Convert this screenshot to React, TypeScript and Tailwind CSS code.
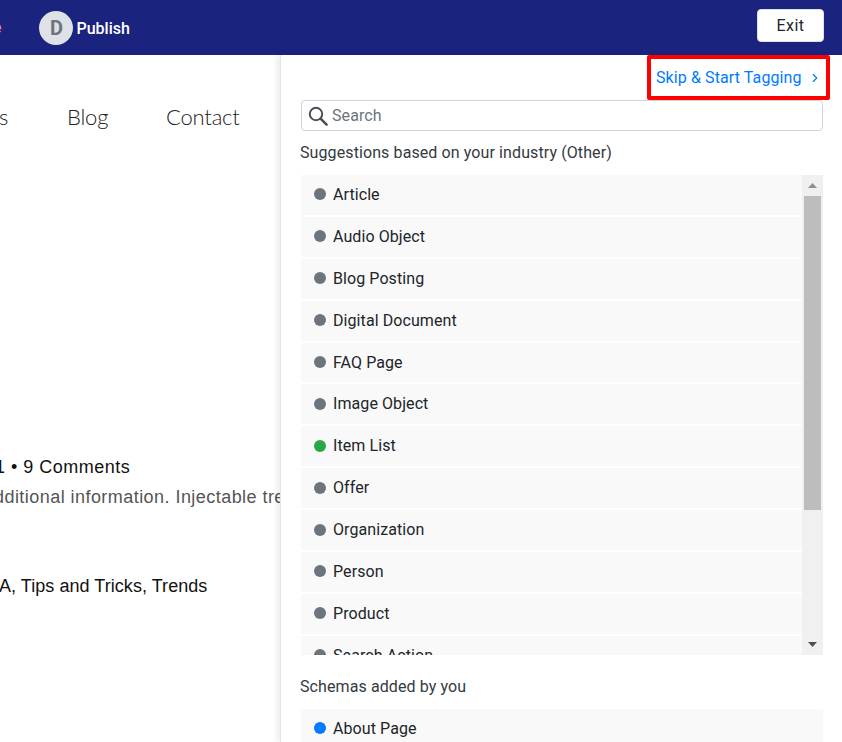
import React from 'react';
import { ChevronRight } from 'lucide-react';

const suggestions = [
    { name: 'Article', color: 'bg-[#6c757d]' },
    { name: 'Audio Object', color: 'bg-[#6c757d]' },
    { name: 'Blog Posting', color: 'bg-[#6c757d]' },
    { name: 'Digital Document', color: 'bg-[#6c757d]' },
    { name: 'FAQ Page', color: 'bg-[#6c757d]' },
    { name: 'Image Object', color: 'bg-[#6c757d]' },
    { name: 'Item List', color: 'bg-[#28a745]' },
    { name: 'Offer', color: 'bg-[#6c757d]' },
    { name: 'Organization', color: 'bg-[#6c757d]' },
    { name: 'Person', color: 'bg-[#6c757d]' },
    { name: 'Product', color: 'bg-[#6c757d]' },
    { name: 'Search Action', color: 'bg-[#6c757d]' },
];

const SchemaRow: React.FC<{ name: string; color: string }> = ({ name, color }) => (
    <div className="flex h-[39.9px] shrink-0 items-center bg-[#f9f9f9] pl-[13px] text-[16px] tracking-[0.08px] text-[#212529]">
        <span className={`mb-[1px] h-3 w-3 rounded-full ${color}`} />
        <span className="ml-[7px]">{name}</span>
    </div>
);

const SearchIcon = () => (
    <svg width="22" height="22" viewBox="0 0 22 22" fill="none" stroke="#495057" strokeWidth="2" strokeLinecap="round">
        <circle cx="9" cy="9" r="6.2" />
        <path d="m13.6 13.6 6 6" strokeWidth="2.6" />
    </svg>
);

const App: React.FC = () => {
    return (
        <div className="flex h-[742px] w-[842px] flex-col overflow-hidden bg-white font-['Roboto',sans-serif]">
            <header className="flex h-[55px] shrink-0 items-center bg-[#1a237e] pr-[18px]">
                <span className="-ml-[7px] mt-[1px] text-[16px] text-[#ff8a65]">e</span>
                <span className="ml-[38px] mt-[1px] flex h-[34px] w-[34px] items-center justify-center rounded-full bg-[#dee2e6] text-[20px] font-bold text-[#6c757d]">D</span>
                <span className="ml-[3px] mt-[2px] text-[16px] font-medium text-white">Publish</span>
                <button className="mb-[4px] ml-auto h-[33px] w-[67px] rounded border border-[#dee2e6] bg-white text-[16px] tracking-[0.5px] text-[#212529]">Exit</button>
            </header>

            <div className="flex min-h-0 flex-1">
                <main className="w-[280px] shrink-0 overflow-hidden whitespace-nowrap font-['Liberation_Sans',sans-serif] text-[18px] text-[#111]">
                    <nav className="mt-[47px] flex font-['Lato',sans-serif] text-[22px] font-light leading-[30px] tracking-[-0.2px] text-[#222]">
                        <span className="-ml-[1px] w-[68px]">s</span>
                        <span className="w-[99px]">Blog</span>
                        <span>Contact</span>
                    </nav>
                    <p className="mt-[323px] -ml-[5px] leading-[24px] tracking-[0.5px]">1 • 9 Comments</p>
                    <p className="mt-[6px] -ml-[6px] leading-[24px] tracking-[0.45px] text-[#555]">dditional information. Injectable trends</p>
                    <p className="mt-[65px] -ml-[1px] leading-[24px] tracking-[0.05px]">A, Tips and Tricks, Trends</p>
                </main>

                <aside className="flex min-w-0 flex-1 flex-col border-l border-[#e4e4e4] pl-[20px] pr-[19px] shadow-[-3px_0_6px_rgba(0,0,0,0.08)]">
                    <div className="flex shrink-0 justify-end">
                        <a className="-mr-[7px] flex h-[45px] w-[183px] items-center rounded-[2px] border-4 border-[#ff0000] pl-[5px] text-[16px] tracking-[0.1px] text-[#007bff]">
                            Skip &amp; Start Tagging
                            <ChevronRight className="ml-[6px]" size={14} strokeWidth={2} />
                        </a>
                    </div>

                    <div className="flex h-[31px] shrink-0 items-center rounded border border-[#ced4da] pl-[5px]">
                        <SearchIcon />
                        <span className="ml-[3px] text-[16px] tracking-[0.1px] text-[#6c757d]">Search</span>
                    </div>

                    <p className="-ml-[1px] mt-[10px] shrink-0 text-[16px] leading-[24px] tracking-[0.1px] text-[#343a40]">Suggestions based on your industry (Other)</p>

                    <div className="mt-[10px] flex h-[480px] shrink-0 overflow-hidden">
                        <div className="flex min-w-0 flex-1 flex-col gap-[2px] overflow-hidden">
                            {suggestions.map((s) => (
                                <SchemaRow key={s.name} name={s.name} color={s.color} />
                            ))}
                        </div>
                        <div className="flex w-[21px] shrink-0 flex-col items-center bg-[#f0f0f0]">
                            <div className="flex h-[21px] w-full shrink-0 items-center justify-center">
                                <svg width="9" height="5" viewBox="0 0 9 5"><path d="M4.5 0 9 5H0z" fill="#8f8f8f" /></svg>
                            </div>
                            <div className="h-[314px] w-[17px] shrink-0 bg-[#bdbdbd]" />
                            <div className="mt-auto flex h-[21px] w-full shrink-0 items-center justify-center">
                                <svg width="9" height="5" viewBox="0 0 9 5"><path d="M0 0h9L4.5 5z" fill="#505050" /></svg>
                            </div>
                        </div>
                    </div>

                    <p className="-ml-[1px] mt-[20px] shrink-0 text-[16px] leading-[24px] tracking-[0.1px] text-[#343a40]">Schemas added by you</p>

                    <div className="mt-[10px] flex shrink-0 flex-col">
                        <SchemaRow name="About Page" color="bg-[#007bff]" />
                    </div>
                </aside>
            </div>
        </div>
    );
};

export default App;
